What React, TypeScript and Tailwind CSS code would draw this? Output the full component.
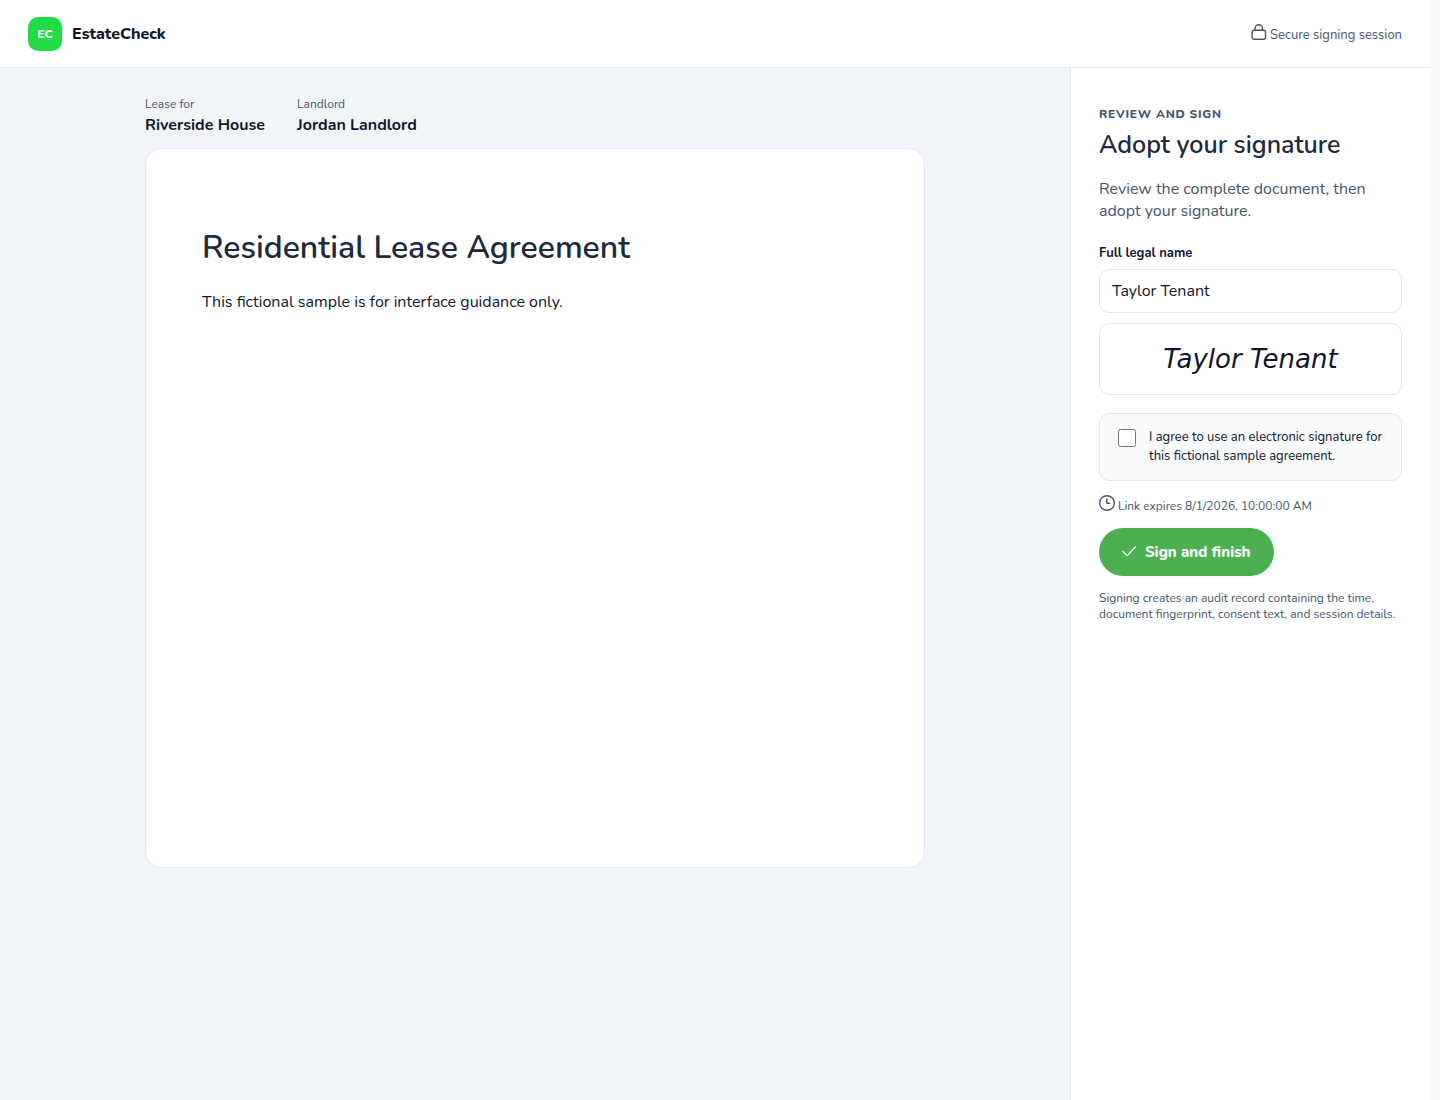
import { useState } from 'react';

const iconStroke = {
  fill: 'none',
  stroke: 'currentColor',
  strokeLinecap: 'round' as const,
  strokeLinejoin: 'round' as const,
};

function LockIcon() {
  return (
    <svg width="16" height="16" viewBox="0 0 16 16" strokeWidth="1.4" aria-hidden="true" {...iconStroke}>
      <path d="M4.1 6.3V4.4a3.7 3.7 0 0 1 7.4 0v1.9" />
      <rect x="1.2" y="6.3" width="13.3" height="9" rx="2" />
    </svg>
  );
}

function ClockIcon() {
  return (
    <svg width="16" height="16" viewBox="0 0 16 16" strokeWidth="1.4" aria-hidden="true" {...iconStroke}>
      <circle cx="8" cy="8" r="7.3" />
      <path d="M7.8 4v4.2h2.8" />
    </svg>
  );
}

function CheckIcon() {
  return (
    <svg width="16" height="16" viewBox="0 0 16 16" strokeWidth="1.2" aria-hidden="true" {...iconStroke}>
      <path d="M1.8 7.4l4.4 4.3 8.3-8.9" />
    </svg>
  );
}

const parties = [
  { label: 'Lease for', value: 'Riverside House' },
  { label: 'Landlord', value: 'Jordan Landlord' },
];

export default function App() {
  const [name, setName] = useState('Taylor Tenant');
  const [agreed, setAgreed] = useState(false);

  return (
    <div className="min-h-screen bg-slate-50 pr-[10px] font-['Nunito','Lato',sans-serif] text-base text-slate-900">
      <div className="flex min-h-screen flex-col">
        <header className="flex h-[68px] items-center justify-between border-b border-slate-200 bg-white px-7">
          <div className="flex items-center gap-[10px]">
            <div className="flex size-[34px] items-center justify-center rounded-[10px] bg-[#22dc46] text-xs font-extrabold text-white">
              EC
            </div>
            <span className="font-extrabold">EstateCheck</span>
          </div>
          <div className="flex items-start gap-[3px] text-[13px] leading-4 text-slate-600">
            <LockIcon />
            <span className="pt-[3px]">Secure signing session</span>
          </div>
        </header>

        <div className="grid flex-1 grid-cols-[minmax(0,1fr)_360px]">
          <main className="bg-slate-100 px-8 py-7">
            <div className="mx-auto max-w-[780px]">
              <dl className="mb-3 flex gap-8">
                {parties.map((party) => (
                  <div key={party.label}>
                    <dt className="text-xs leading-4 text-slate-600">{party.label}</dt>
                    <dd className="mt-[2px] font-bold leading-[22px]">{party.value}</dd>
                  </div>
                ))}
              </dl>

              <article className="min-h-[720px] rounded-2xl border border-slate-200 bg-white px-14 py-[79px]">
                <h1 className="text-[32px] font-semibold leading-10 text-slate-800">Residential Lease Agreement</h1>
                <p className="mt-[23px] leading-[22px]">This fictional sample is for interface guidance only.</p>
              </article>
            </div>
          </main>

          <aside className="border-l border-slate-200 bg-white px-7 py-[38px]">
            <p className="text-xs font-extrabold uppercase leading-4 tracking-[0.06em] text-slate-600">Review and sign</p>
            <h2 className="mt-2 text-[25px] font-semibold leading-[30px] text-slate-800">Adopt your signature</h2>
            <p className="mt-[18px] leading-[22px] text-slate-600">
              Review the complete document, then adopt your signature.
            </p>

            <form onSubmit={(e) => e.preventDefault()}>
              <label htmlFor="legal-name" className="mt-[22px] block text-[13px] font-bold leading-[18px]">
                Full legal name
              </label>
              <input
                id="legal-name"
                type="text"
                value={name}
                onChange={(e) => setName(e.target.value)}
                className="mt-[7px] h-11 w-full rounded-[10px] border border-slate-200 bg-white px-3 outline-none focus:border-slate-400"
              />

              <div className="mt-[10px] flex h-[72px] items-center justify-center rounded-[10px] border border-slate-200 font-['DejaVu_Sans',sans-serif] text-[26px] italic">
                {name}
              </div>

              <label className="mt-[18px] flex items-start gap-[13px] rounded-[10px] border border-slate-200 bg-slate-50 px-[18px] py-[14px] text-[13px] leading-[19px]">
                <input
                  type="checkbox"
                  checked={agreed}
                  onChange={(e) => setAgreed(e.target.checked)}
                  className="mt-px size-[18px] shrink-0"
                />
                <span>I agree to use an electronic signature for this fictional sample agreement.</span>
              </label>

              <div className="mt-[14px] flex items-start gap-[3px] text-xs leading-[18px] text-slate-600">
                <ClockIcon />
                <span className="pt-[2px]">Link expires 8/1/2026, 10:00:00 AM</span>
              </div>

              <button
                type="submit"
                className="mt-[13px] flex h-12 items-center gap-2 rounded-full bg-[#4caf50] pr-6 pl-[22px] text-[15px] font-extrabold text-white"
              >
                <CheckIcon />
                Sign and finish
              </button>
            </form>

            <p className="mt-[14px] text-xs leading-4 text-slate-600">
              Signing creates an audit record containing the time, document fingerprint, consent text, and session details.
            </p>
          </aside>
        </div>
      </div>
    </div>
  );
}
